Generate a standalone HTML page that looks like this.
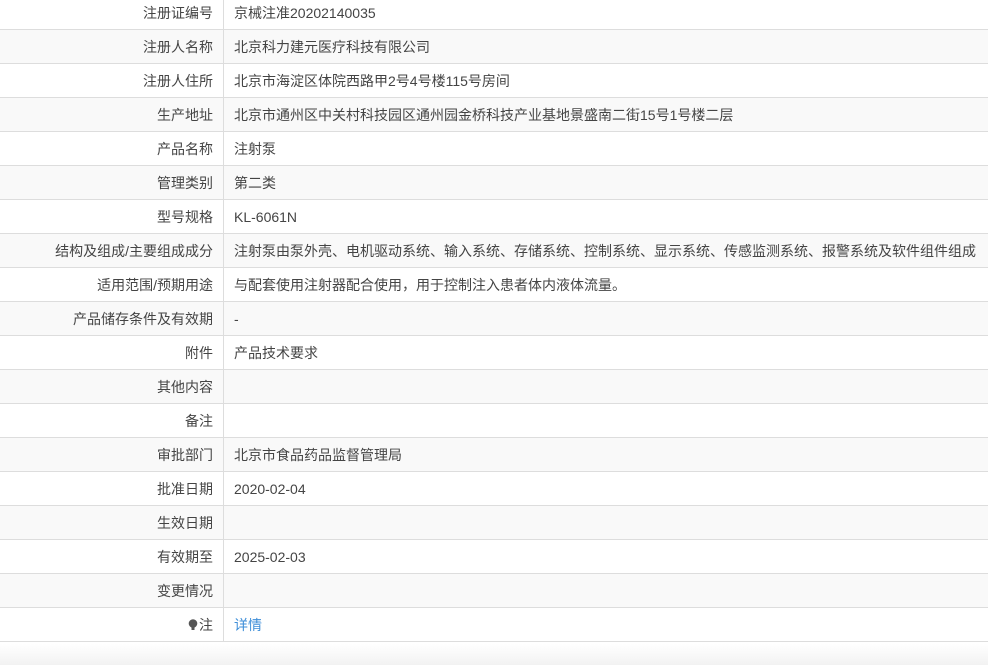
<!DOCTYPE html>
<html><head><meta charset="utf-8"><style>
html,body{margin:0;padding:0;width:988px;height:665px;overflow:hidden;background:#fff;font-family:"Liberation Sans","Noto Sans CJK SC",sans-serif;font-size:14px;color:#333}
table{position:absolute;top:-4px;left:0;width:988px;border-collapse:collapse}
td{height:33px;border-bottom:1px solid #ddd;padding:0;line-height:33px;white-space:nowrap}
td span{position:relative;top:1px}
td.l{width:213px;text-align:right;padding-right:10px;border-right:1px solid #ddd;color:#444}
td.v{padding-left:10px;color:#444}
tr:nth-child(even) td{background:#f9f9f9}
a{color:#3e8ed8;text-decoration:none}
.foot{position:absolute;top:644px;left:0;width:988px;height:21px;background:linear-gradient(#fff,#f2f2f2)}
</style></head><body>
<table>
<tr><td class="l"><span>注册证编号</span></td><td class="v"><span>京械注准20202140035</span></td></tr>
<tr><td class="l"><span>注册人名称</span></td><td class="v"><span>北京科力建元医疗科技有限公司</span></td></tr>
<tr><td class="l"><span>注册人住所</span></td><td class="v"><span>北京市海淀区体院西路甲2号4号楼115号房间</span></td></tr>
<tr><td class="l"><span>生产地址</span></td><td class="v"><span>北京市通州区中关村科技园区通州园金桥科技产业基地景盛南二街15号1号楼二层</span></td></tr>
<tr><td class="l"><span>产品名称</span></td><td class="v"><span>注射泵</span></td></tr>
<tr><td class="l"><span>管理类别</span></td><td class="v"><span>第二类</span></td></tr>
<tr><td class="l"><span>型号规格</span></td><td class="v"><span>KL-6061N</span></td></tr>
<tr><td class="l"><span>结构及组成/主要组成成分</span></td><td class="v"><span>注射泵由泵外壳、电机驱动系统、输入系统、存储系统、控制系统、显示系统、传感监测系统、报警系统及软件组件组成</span></td></tr>
<tr><td class="l"><span>适用范围/预期用途</span></td><td class="v"><span>与配套使用注射器配合使用，用于控制注入患者体内液体流量。</span></td></tr>
<tr><td class="l"><span>产品储存条件及有效期</span></td><td class="v"><span>-</span></td></tr>
<tr><td class="l"><span>附件</span></td><td class="v"><span>产品技术要求</span></td></tr>
<tr><td class="l"><span>其他内容</span></td><td class="v"></td></tr>
<tr><td class="l"><span>备注</span></td><td class="v"></td></tr>
<tr><td class="l"><span>审批部门</span></td><td class="v"><span>北京市食品药品监督管理局</span></td></tr>
<tr><td class="l"><span>批准日期</span></td><td class="v"><span>2020-02-04</span></td></tr>
<tr><td class="l"><span>生效日期</span></td><td class="v"></td></tr>
<tr><td class="l"><span>有效期至</span></td><td class="v"><span>2025-02-03</span></td></tr>
<tr><td class="l"><span>变更情况</span></td><td class="v"></td></tr>
<tr><td class="l"><span><svg width="10" height="12" viewBox="0 0 10 12" style="vertical-align:-1px;margin-right:1px"><circle cx="5" cy="4.5" r="4.3" fill="#555"/><rect x="3.5" y="8" width="3" height="3" fill="#555"/></svg>注</span></td><td class="v"><span><a>详情</a></span></td></tr>
</table>
<div class="foot"></div>
</body></html>
